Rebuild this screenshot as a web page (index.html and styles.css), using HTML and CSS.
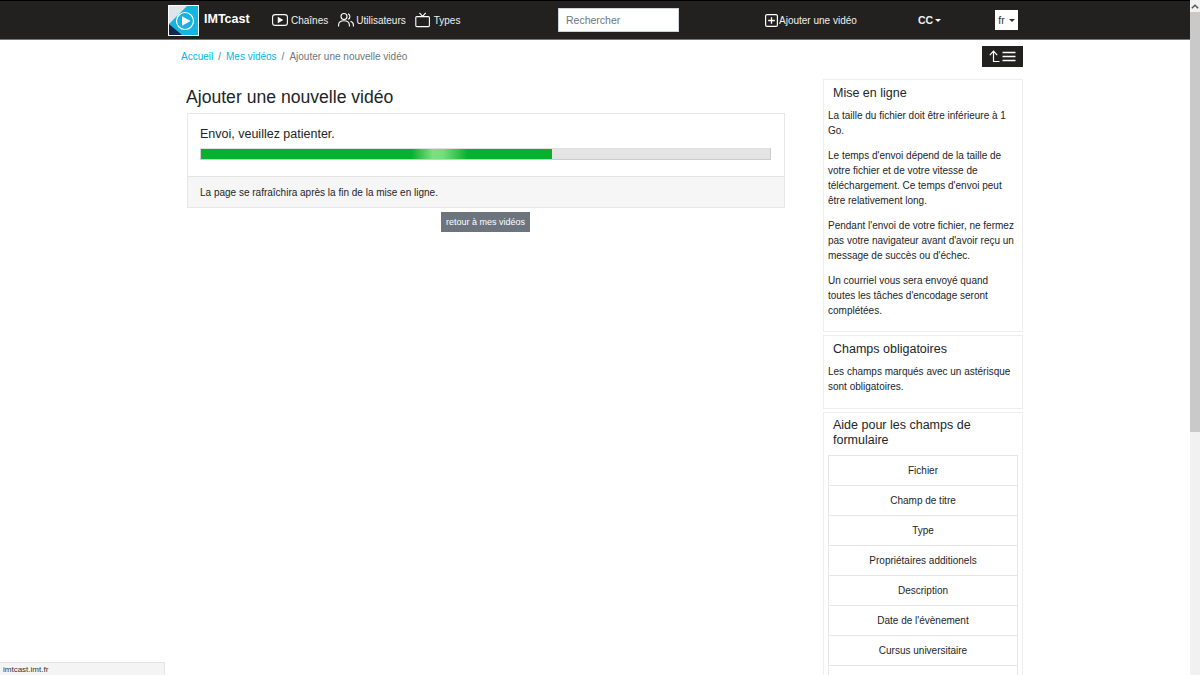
FILE: index.html
```html
<!DOCTYPE html>
<html lang="fr">
<head>
<meta charset="utf-8">
<title>IMTcast</title>
<link rel="stylesheet" href="styles.css">
</head>
<body>
<div class="page">
  <header class="navbar">
    <div class="brand">
      <svg class="logo" width="31" height="31" viewBox="0 0 31 31">
        <rect x="0.5" y="0.5" width="30" height="30" fill="#dfe6e9" stroke="#fff"/>
        <path d="M1 19L19 1H30V30H13z" fill="#15b5e0"/>
        <path d="M1 19V30H14z" fill="#14284d"/>
        <circle cx="17" cy="16" r="8.5" fill="none" stroke="#fff" stroke-width="1.2"/>
        <path d="M14 11.2L22.5 16L14 20.8z" fill="#fff"/>
      </svg>
      <span class="brand-name">IMTcast</span>
    </div>
    <nav class="nav-links">
      <a class="nav-link"><svg width="16" height="16" viewBox="0 0 16 16" fill="none" stroke="#fff" stroke-width="1.1"><rect x="0.6" y="2.6" width="14.8" height="10.8" rx="2.5"/><path d="M6.3 5.7L10.2 8L6.3 10.3z" fill="#fff"/></svg>Chaînes</a>
      <a class="nav-link nav-link-tight"><svg width="16" height="16" viewBox="0 0 16 16" fill="none" stroke="#fff" stroke-width="1.1"><circle cx="6" cy="4.5" r="3"/><path d="M0.6 14.5V13c0-2.6 2-4.2 5.4-4.2S11.4 10.4 11.4 13v1.500"/><path d="M10 1.700a3 3 0 0 1 0 5.600M12.500 9.300c1.800.6 2.900 1.900 2.900 3.700v1.500"/></svg>Utilisateurs</a>
      <a class="nav-link"><svg width="16" height="16" viewBox="0 0 16 16" fill="none" stroke="#fff" stroke-width="1.1"><rect x="0.8" y="4.6" width="13.6" height="10" rx="1"/><path d="M4.500 0.800L7.600 4.300L10.700 0.800"/></svg>Types</a>
    </nav>
    <input class="search" type="text" placeholder="Rechercher">
    <a class="nav-link add-link"><svg width="13" height="13" viewBox="0 0 13 13" fill="none" stroke="#fff"><rect x="0.6" y="0.6" width="11.8" height="11.800" rx="1.500" stroke-width="1.200"/><path d="M6.500 3.200V9.800M3.200 6.500H9.800" stroke-width="1.300"/></svg>Ajouter une vidéo</a>
    <span class="user">CC<i class="caret caret-white"></i></span>
    <span class="lang">fr<i class="caret"></i></span>
  </header>

  <div class="crumb-row">
    <ol class="breadcrumb">
      <li><a>Accueil</a></li>
      <li class="sep">/</li>
      <li><a>Mes vidéos</a></li>
      <li class="sep">/</li>
      <li class="current">Ajouter une nouvelle vidéo</li>
    </ol>
    <button class="collapse-btn" type="button">
      <svg width="27" height="13" viewBox="0 0 27 13" fill="none" stroke="#fff" stroke-width="1.200"><path d="M4.500 12V1.500M0.800 5.200L4.500 1.200L8.200 5.200M4.500 11.500H10.500"/><path d="M13.500 2.500H26.500M13.500 6.500H26.500M13.500 10.500H26.500" stroke-width="1.500"/></svg>
    </button>
  </div>

  <div class="content">
    <main class="main">
      <h1 class="title">Ajouter une nouvelle vidéo</h1>
      <section class="card">
        <div class="card-body">
          <p class="status">Envoi, veuillez patienter.</p>
          <div class="progress"><div class="progress-bar" style="width:61.6%"></div></div>
        </div>
        <div class="card-footer">La page se rafraîchira après la fin de la mise en ligne.</div>
      </section>
      <div class="back"><a class="btn-back">retour à mes vidéos</a></div>
    </main>
    <aside class="sidebar">
      <section class="panel">
        <h2>Mise en ligne</h2>
        <p>La taille du fichier doit être inférieure à 1 Go.</p>
        <p>Le temps d'envoi dépend de la taille de votre fichier et de votre vitesse de téléchargement. Ce temps d'envoi peut être relativement long.</p>
        <p>Pendant l'envoi de votre fichier, ne fermez pas votre navigateur avant d'avoir reçu un message de succès ou d'échec.</p>
        <p>Un courriel vous sera envoyé quand toutes les tâches d'encodage seront complétées.</p>
      </section>
      <section class="panel panel-mid">
        <h2>Champs obligatoires</h2>
        <p>Les champs marqués avec un astérisque sont obligatoires.</p>
      </section>
      <section class="panel panel-help">
        <h2>Aide pour les champs de formulaire</h2>
        <ul class="help-list">
          <li>Fichier</li>
          <li>Champ de titre</li>
          <li>Type</li>
          <li>Propriétaires additionels</li>
          <li>Description</li>
          <li>Date de l'évènement</li>
          <li>Cursus universitaire</li>
          <li></li>
        </ul>
      </section>
    </aside>
  </div>
</div>
<div class="scrollbar">
  <div class="scroll-arrow"><svg width="8" height="5" viewBox="0 0 8 5" fill="none" stroke="#555" stroke-width="1.500"><path d="M0.800 4.300L4 1.200L7.200 4.300"/></svg></div>
  <div class="scroll-thumb"></div>
</div>
<div class="statusbar">imtcast.imt.fr</div>
</body>
</html>
```

FILE: styles.css
```css
* { box-sizing: border-box; }
html, body { margin: 0; height: 675px; overflow: hidden; }
body { display: flex; font-family: "Liberation Sans", Arial, sans-serif; font-size: 10px; line-height: 15px; color: #212529; background: #fff; }
.page { flex: 1; min-width: 0; height: 675px; overflow: hidden; }

.navbar { display: flex; align-items: center; height: 40px; padding-left: 168px; background: #222120; border-top: 1px solid #000; border-bottom: 1px solid #777; color: #fff; }
.brand { display: flex; align-items: center; width: 104px; }
.logo { display: block; }
.brand-name { margin: -2px 0 0 5px; font-size: 12.5px; font-weight: bold; }
.nav-links { display: flex; gap: 10px; width: 286px; }
.nav-link { display: flex; align-items: center; gap: 3px; color: #f0f0f0; white-space: nowrap; }
.nav-link-tight { gap: 2px; margin-right: -1px; }
.search { width: 121px; height: 24px; margin: 0; padding: 0 7px; border: 1px solid #ced4da; background: #fff; font: 10.5px "Liberation Sans", Arial, sans-serif; }
.search::placeholder { color: #6c757d; opacity: 1; }
.add-link { margin-left: 86px; width: 153px; gap: 1px; }
.user { width: 77px; font-size: 10.5px; font-weight: bold; color: #f0f0f0; }
.lang { display: flex; align-items: center; justify-content: center; width: 23px; height: 20px; font-size: 10.5px; background: #fff; color: #333; }
.caret { display: inline-block; margin-left: 4px; border-top: 3px solid #333; border-left: 3px solid transparent; border-right: 3px solid transparent; }
.caret-white { border-top-color: #fff; margin-left: 2px; vertical-align: 2px; }

.crumb-row { display: flex; justify-content: space-between; align-items: center; width: 1023px; padding: 6px 0 0 181px; height: 27px; }
.breadcrumb { display: flex; gap: 5px; margin: 0; padding: 0; list-style: none; }
.breadcrumb a { color: #00b7e8; }
.breadcrumb .sep, .breadcrumb .current { color: #6c757d; }
.collapse-btn { display: flex; align-items: center; justify-content: center; width: 41px; height: 21px; padding: 0; border: 0; background: #222120; }

.content { display: flex; align-items: flex-start; width: 1023px; padding: 12px 0 0 186px; }
.main { width: 599px; padding-top: 8px; }
.title { margin: 0 0 5px; font-size: 17.6px; line-height: 21px; font-weight: normal; color: #212529; }
.card { margin-left: 1px; border: 1px solid #e8e8e8; }
.card-body { height: 62px; padding: 13px 13px 0 12px; }
.status { margin: 0 0 6px; font-size: 12.5px; line-height: 15px; }
.progress { height: 12px; border: 1px solid #ccc; border-top-color: #e0e0e0; border-left-color: #d0d0d0; background: #e4e4e4; }
.progress-bar { height: 100%; background: linear-gradient(90deg, #09b02d 0, #09b02d 60%, #7be07f 66%, #70e078 69%, #09b02d 76%); }
.card-footer { height: 31px; padding: 8px 12px; border-top: 1px solid #e4e4e4; background: #f6f6f6; }
.back { display: flex; justify-content: center; padding-top: 4px; }
.btn-back { display: block; height: 20px; padding: 3px 5px; font-size: 9px; color: #fff; background: #6c757d; }

.sidebar { display: flex; flex-direction: column; gap: 3px; width: 200px; margin-left: 38px; }
.panel { padding: 6px 4px 3px; border: 1px solid #eeeeee; }
.panel-mid { padding-bottom: 4px; }
.panel-help { padding-top: 5px; }
.panel h2 { margin: 0 0 7px; padding-left: 5px; font-size: 12.5px; line-height: 15px; font-weight: normal; }
.panel p { margin: 0 0 10px; }
.help-list { margin: 0; padding: 0; list-style: none; }
.help-list li { height: 30px; padding-top: 7px; border: 1px solid #e6e6e6; border-bottom-width: 0; text-align: center; }

.scrollbar { flex: none; width: 10px; height: 675px; background: #f1f1f1; }
.scroll-arrow { display: flex; align-items: center; justify-content: center; height: 12px; background: #f1f1f1; }
.scroll-thumb { height: 420px; background: #c9c9c9; }

.statusbar { position: fixed; left: 0; bottom: 0; width: 165px; height: 13px; padding-left: 3px; font-size: 8px; line-height: 13px; color: #333; background: #f4f4f4; border-top: 1px solid #e4e4e4; border-right: 1px solid #e4e4e4; }
```
